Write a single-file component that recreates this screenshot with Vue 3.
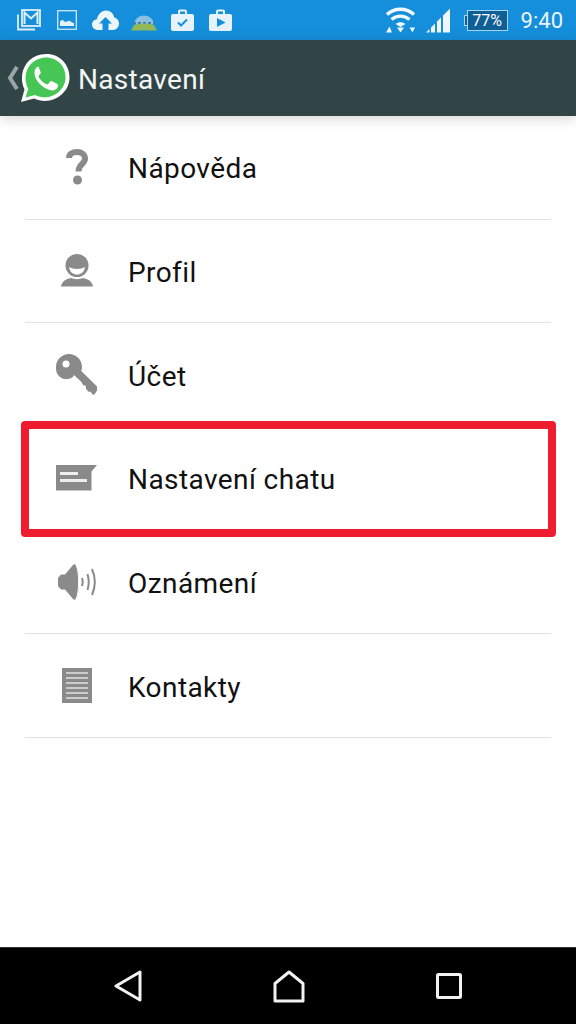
<template>
  <div class="phone">
    <div class="status-bar">
      <div class="status-left">
        <!-- gmail -->
        <svg width="24" height="22" viewBox="0 0 24 22">
          <path d="M1 5.500V20.500H18" fill="none" stroke="#dff0fb" stroke-width="1.800"/>
          <rect x="5" y="1" width="18" height="16" fill="none" stroke="#dff0fb" stroke-width="1.800"/>
          <path d="M7.500 15V3.500L14 9.500L20.500 3.500V15" fill="none" stroke="#dff0fb" stroke-width="2"/>
        </svg>
        <!-- gallery -->
        <svg class="wide-gap" width="20" height="20" viewBox="0 0 20 20">
          <rect x="0.700" y="0.700" width="18.600" height="18.600" fill="none" stroke="#cfe7f8" stroke-width="1.300"/>
          <path d="M3 16V11.500C4.500 9.500 6 9.500 7.500 11.500C9.500 13 11 10 13 11C14.500 12 15.500 13 17 13V16Z" fill="#e4f2fc"/>
        </svg>
        <!-- cloud upload -->
        <svg width="27" height="20" viewBox="0 0 27 20">
          <path d="M6 20C2.500 20 0 17.500 0 14.500C0 11.500 2.200 9.500 5 9.200C6 4 9.500 0.500 14 0.500C18.500 0.500 21.500 3.500 22.300 7.500C25 8 27 10.500 27 13.500C27 17 24.500 20 21 20H16.500V13.500H20L13.500 7L7 13.500H10.500V20Z" fill="#ecf6fd"/>
        </svg>
        <!-- landscape widget -->
        <svg class="landscape" width="26" height="16" viewBox="0 0 26 16">
          <path d="M3 9C4 3.500 8 0.500 13 0.500C18 0.500 22 3.500 23 9Z" fill="#8cc0de"/>
          <path d="M2 8H24" stroke="#3f7fb0" stroke-width="2" stroke-dasharray="3 2"/>
          <path d="M0 15.500L3 10C8 8 18 8 23 10L26 15.500Z" fill="#94b95a"/>
        </svg>
        <!-- task case -->
        <svg class="task" width="23" height="22" viewBox="0 0 23 22">
          <path d="M2 5H7V2.500C7 1.200 8 0.500 9 0.500H14C15 0.500 16 1.200 16 2.500V5H21C22.200 5 23 5.800 23 7V20C23 21.200 22.200 22 21 22H2C0.800 22 0 21.200 0 20V7C0 5.800 0.800 5 2 5ZM9 5H14V2.500H9Z" fill="#e6f3fc" fill-rule="evenodd"/>
          <path d="M7 13.500L10 16.500L16 10.500" fill="none" stroke="#158fdb" stroke-width="2"/>
        </svg>
        <!-- play case -->
        <svg width="23" height="22" viewBox="0 0 23 22">
          <path d="M2 5H7V2.500C7 1.200 8 0.500 9 0.500H14C15 0.500 16 1.200 16 2.500V5H21C22.200 5 23 5.800 23 7V20C23 21.200 22.200 22 21 22H2C0.800 22 0 21.200 0 20V7C0 5.800 0.800 5 2 5ZM9 5H14V2.500H9Z" fill="#e6f3fc" fill-rule="evenodd"/>
          <path d="M8 9L16.500 13.500L8 18Z" fill="#158fdb"/>
        </svg>
      </div>
      <div class="status-right">
        <!-- wifi -->
        <svg width="31" height="26" viewBox="0 0 31 26">
          <path d="M2 7.500C9.500 0.500 21.500 0.500 29 7.500" fill="none" stroke="#f2f9fe" stroke-width="3.500"/>
          <path d="M6.500 12.500C11.500 8 19.500 8 24.500 12.500" fill="none" stroke="#f2f9fe" stroke-width="3.200"/>
          <path d="M10.500 17C13.500 14.500 17.500 14.500 20.500 17L15.500 20Z" fill="#f2f9fe"/>
          <path d="M1 25.500L4.500 19.500L7 25.500ZM12 20.500H19L15.500 25.500ZM24.500 20.500H30L27.500 25.500Z" fill="#f2f9fe"/>
        </svg>
        <!-- signal -->
        <svg width="25" height="25" viewBox="0 0 25 25">
          <path d="M0 24.500L3.500 21V24.500ZM5 19.500L9 15.500V24.500H5ZM11 13.500L15 9.500V24.500H11ZM17 7.500L24 0.500V24.500H17Z" fill="#eef7fd"/>
        </svg>
        <!-- battery -->
        <div class="battery">
          <span class="battery-tip"></span>
          <span class="battery-body">77%</span>
        </div>
        <span class="clock">9:40</span>
      </div>
    </div>

    <div class="toolbar">
      <svg class="chevron" width="12" height="24" viewBox="0 0 12 24">
        <path d="M10 1L3 12L10 23" fill="none" stroke="#9aa5a5" stroke-width="4"/>
      </svg>
      <svg class="logo" width="50" height="50" viewBox="0 0 50 50">
        <path d="M1 49L4.500 36.500C-2 23 4 5 21 1.500C37 -2 50 10 49.500 25C49 42 30 53 14 45.500Z" fill="#fff"/>
        <path d="M5.500 44.500L8.300 35.800C2 24 7 8 22 5C35 2.500 46 12 45.600 25C45 39 29 49 15 42Z" fill="#45c655"/>
        <path d="M18.500 13.500C17 13.500 14.500 16 14.500 19.500C14.500 25 18 29.500 21.500 32.500C25.500 36 30 37.500 33 37.500C36 37 38 35 38 32.500C38 31.500 37.500 31 36.500 30.500L32 28.300C31 28 30.500 28 30 28.700L28.200 31C27.700 31.500 27.200 31.500 26.500 31.200C24.500 30.300 22.500 29 21 27.200C20 26 19 24.800 18.700 23.800C18.400 23.300 18.600 22.800 19 22.300L20.500 20.500C20.900 20 20.900 19.500 20.700 19L18.800 14.500C18.500 13.800 18.500 13.500 18.500 13.500Z" fill="#fff"/>
      </svg>
      <span class="title">Nastavení</span>
    </div>

    <div class="settings">
      <div v-for="item in items" :key="item.label" class="row">
        <div class="row-icon">
          <svg v-if="item.icon === 'help'" width="22" height="36" viewBox="0 0 22 36">
            <path d="M3 9C3 5 6.500 3 11 3C15.500 3 19 5.500 19 9.500C19 15 12.500 15 12.500 22.500" fill="none" stroke="#8a8a8a" stroke-width="6"/>
            <circle cx="11.500" cy="31" r="4.500" fill="#8a8a8a"/>
          </svg>
          <svg v-else-if="item.icon === 'profile'" width="32" height="33" viewBox="0 0 32 33">
            <circle cx="16" cy="11.500" r="11.500" fill="#8a8a8a"/>
            <path d="M8 13C12 15.500 20 15.500 24 13C23 18.500 20 20.500 16 20.500C12 20.500 9 18.500 8 13Z" fill="#fff"/>
            <path d="M0 32.500C1 27 5 25 10 24C13 25.500 19 25.500 22 24C27 25 31 27 32 32.500Z" fill="#8a8a8a"/>
          </svg>
          <svg v-else-if="item.icon === 'key'" width="42" height="42" viewBox="0 0 42 42">
            <path d="M13 0C20 0 26 5.500 26 13C26 14.500 25.700 16 25.300 17L41 32.500V36.500L38.500 40.500H36.500L34.500 37.500L33 38L30 35V32L27 31L25.500 28L18 21C16.500 25 9 27 4 23C0.500 20 0 17 0 13C0 5.500 6 0 13 0Z" fill="#8a8a8a"/>
            <circle cx="10" cy="10" r="3.500" fill="#fff"/>
          </svg>
          <svg v-else-if="item.icon === 'chat'" width="42" height="26" viewBox="0 0 42 26">
            <path d="M0 0H41L35.500 6.500V25.500H0Z" fill="#8a8a8a"/>
            <path d="M4 7H22V10H4ZM4 14H31V17H4Z" fill="#eee"/>
          </svg>
          <svg v-else-if="item.icon === 'sound'" width="38" height="38" viewBox="0 0 38 38">
            <path d="M0 15L3 11.500H7L15 2C18 -1 21 6 21 19C21 32 18 39 15 36L7 26.500H3L0 23Z" fill="#8a8a8a"/>
            <path d="M18 2C21.500 8 21.500 30 18 36" fill="none" stroke="#fff" stroke-width="1"/>
            <path d="M24 15C25 18 25 20 24 23M29.500 11C31 16 31 22 29.500 27M34 6C37.500 14 37.500 24 34 32" fill="none" stroke="#8a8a8a" stroke-width="2"/>
          </svg>
          <svg v-else width="30" height="35" viewBox="0 0 30 35">
            <rect width="30" height="35" fill="#8a8a8a"/>
            <path d="M4 5H26M4 10H26M4 15H26M4 20H26M4 25H26M4 30H26" stroke="#e2e2e2" stroke-width="1.500"/>
          </svg>
        </div>
        <span class="row-label">{{ item.label }}</span>
      </div>
      <div class="highlight"></div>
    </div>

    <div class="nav-bar">
      <svg width="28" height="32" viewBox="0 0 28 32">
        <path d="M26 2V30L2 16Z" fill="none" stroke="#f2f2f2" stroke-width="3" stroke-linejoin="round"/>
      </svg>
      <svg width="32" height="33" viewBox="0 0 32 33">
        <path d="M2 31V13.500L16 2L30 13.500V31Z" fill="none" stroke="#f2f2f2" stroke-width="3" stroke-linejoin="round"/>
      </svg>
      <svg width="26" height="26" viewBox="0 0 26 26">
        <rect x="1.500" y="1.500" width="23" height="23" rx="1" fill="none" stroke="#f2f2f2" stroke-width="3"/>
      </svg>
    </div>
  </div>
</template>

<script setup>
const items = [
  { label: 'Nápověda', icon: 'help' },
  { label: 'Profil', icon: 'profile' },
  { label: 'Účet', icon: 'key' },
  { label: 'Nastavení chatu', icon: 'chat' },
  { label: 'Oznámení', icon: 'sound' },
  { label: 'Kontakty', icon: 'list' }
]
</script>

<style scoped>
.phone {
  width: 576px;
  height: 1024px;
  display: flex;
  flex-direction: column;
  background-color: #FFFFFF;
  font-family: Roboto, "Noto Sans", sans-serif;
  overflow: hidden;
}

.status-bar {
  height: 40px;
  flex: none;
  display: flex;
  align-items: center;
  justify-content: space-between;
  padding: 0 13px 0 17px;
  background-color: #158FDB;
}

.status-left,
.status-right {
  display: flex;
  align-items: center;
}

.status-left {
  gap: 15px;
}

.wide-gap {
  margin-left: 1px;
}

.landscape {
  margin-left: -3px;
  margin-top: 5px;
}

.task {
  margin-left: -1px;
}

.status-right {
  gap: 10px;
}

.battery {
  display: flex;
  align-items: center;
  margin-left: 3px;
}

.battery-tip {
  width: 3px;
  height: 11px;
  background-color: #0F5E96;
  border: 1px solid #A9D5F2;
  border-right: none;
  box-sizing: border-box;
}

.battery-body {
  width: 41px;
  height: 21px;
  box-sizing: border-box;
  border: 1px solid #A9D5F2;
  background-color: #0F5E96;
  color: #FFFFFF;
  font-size: 16px;
  line-height: 19px;
  text-align: center;
}

.clock {
  margin-left: 3px;
  color: #EAF5FC;
  font-size: 22px;
}

.toolbar {
  position: relative;
  z-index: 1;
  height: 76px;
  flex: none;
  display: flex;
  align-items: center;
  padding-left: 7px;
  background-color: #324546;
  box-shadow: 0 2px 12px rgba(0, 0, 0, 0.18);
}

.chevron {
  flex: none;
}

.logo {
  flex: none;
  margin-left: 1px;
}

.title {
  margin-left: 8px;
  padding-top: 3px;
  color: #F4F6F6;
  font-size: 28px;
  letter-spacing: 0.3px;
}

.settings {
  position: relative;
  flex: 1;
}

.row {
  height: 103.670px;
  box-sizing: border-box;
  margin: 0 25px;
  display: flex;
  align-items: center;
  border-bottom: 1px solid #E2E2E2;
}

.row-icon {
  width: 103px;
  flex: none;
  display: flex;
  align-items: center;
  justify-content: center;
}

.row-label {
  padding-top: 3px;
  color: #111111;
  font-size: 28px;
  letter-spacing: 0.42px;
}

.highlight {
  position: absolute;
  left: 21px;
  top: 305px;
  width: 535px;
  height: 116px;
  box-sizing: border-box;
  border: 8px solid #EE1C2E;
  border-radius: 4px;
}

.nav-bar {
  height: 77px;
  flex: none;
  display: flex;
  align-items: center;
  gap: 131px;
  padding-left: 114px;
  box-sizing: border-box;
  background-color: #000000;
  border-top: 1px solid #333333;
}
</style>
